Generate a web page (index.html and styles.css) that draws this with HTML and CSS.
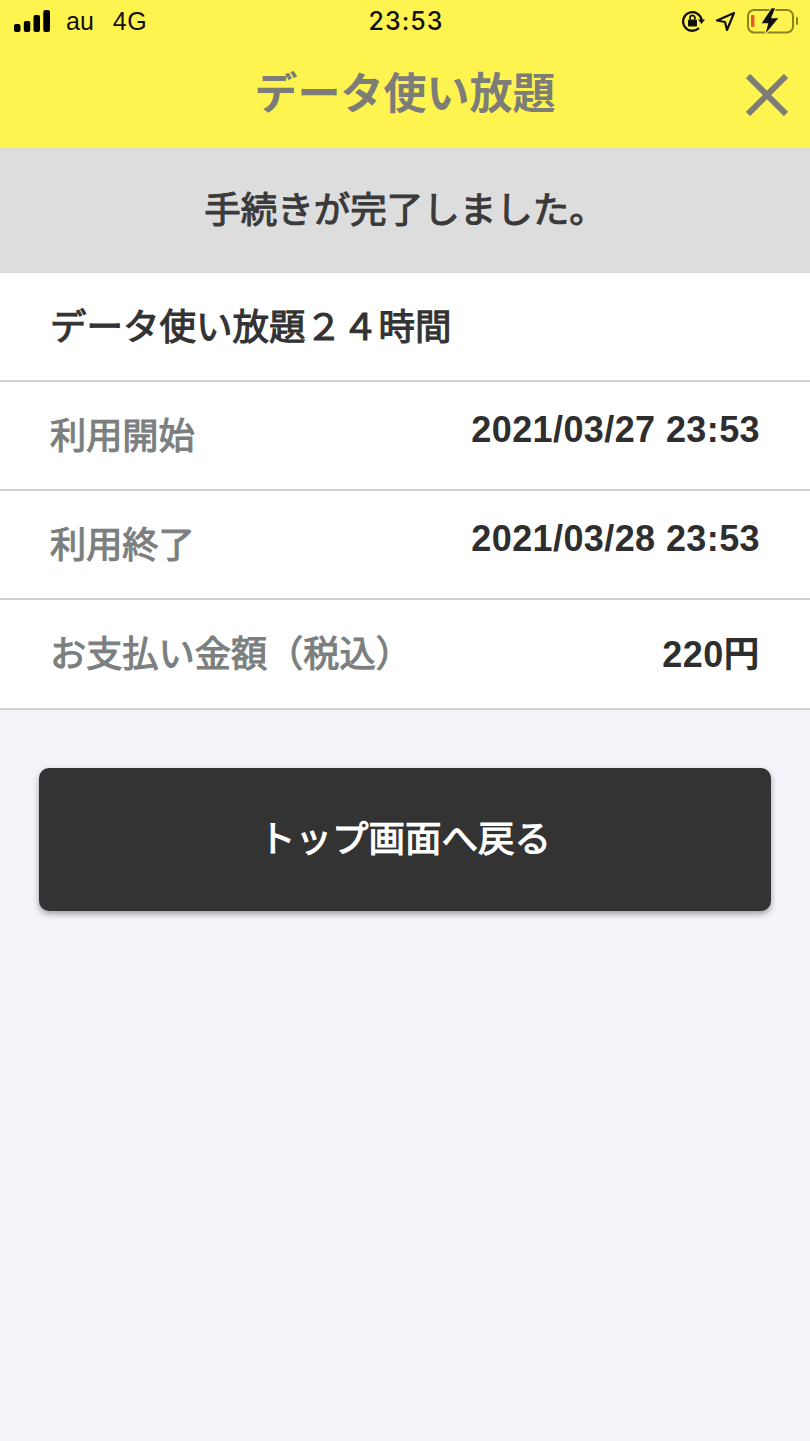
FILE: index.html
```html
<!DOCTYPE html>
<html lang="ja">
<head>
    <meta charset="UTF-8">
    <meta name="viewport" content="width=device-width, initial-scale=1.0">
    <title>データ使い放題</title>
    <link rel="stylesheet" href="styles.css">
</head>
<body>

    <!-- ステータスバー + ヘッダー -->
    <header class="top">
        <div class="status-bar">
            <div class="status-left">
                <svg class="signal" width="36" height="22" viewBox="0 0 36 22">
                    <rect x="0" y="14" width="6.5" height="8" rx="2"/>
                    <rect x="9.8" y="11" width="6.5" height="11" rx="2"/>
                    <rect x="19.5" y="5" width="6.5" height="17" rx="2"/>
                    <rect x="29.3" y="0" width="6.7" height="22" rx="2"/>
                </svg>
                <span class="carrier">au</span>
                <span class="network">4G</span>
            </div>
            <div class="status-time">23:53</div>
            <div class="status-right">
                <svg width="24" height="24" viewBox="0 0 24 24">
                    <path d="M20.6 11a9.3 9.3 0 1 0-2.6 8" fill="none" stroke="#111" stroke-width="2.3"/>
                    <path d="M17 10.5h7l-3.5 4.5z" fill="#111"/>
                    <rect x="7" y="10.5" width="9" height="7" rx="1" fill="#111"/>
                    <path d="M9.1 10.5V8.8a2.4 2.4 0 0 1 4.8 0v1.7" fill="none" stroke="#111" stroke-width="1.7"/>
                </svg>
                <svg class="location" width="21" height="21" viewBox="0 0 21 21">
                    <path d="M19 2 2 9.5l8 1.5 2 8z" fill="none" stroke="#111" stroke-width="2.2" stroke-linejoin="round"/>
                </svg>
                <svg class="battery" width="52" height="30" viewBox="0 0 52 30">
                    <rect x="2" y="4" width="45" height="22.5" rx="6" fill="none" stroke="#8a8420" stroke-width="2"/>
                    <rect x="5" y="9" width="3.4" height="12" rx="1" fill="#e2592a"/>
                    <rect x="50" y="11" width="2" height="8" rx="1" fill="#8a8420"/>
                    <path class="bolt" d="M25.7 2.3 15.7 17.3h6.6l-2.6 10 12.6-15h-7.3l4-10z"/>
                </svg>
            </div>
        </div>
        <div class="title-bar">
            <h1>データ使い放題</h1>
            <svg class="close" width="42" height="42" viewBox="0 0 42 42">
                <path d="M2 2 40 40M40 2 2 40" stroke="#7d7d78" stroke-width="6" fill="none"/>
            </svg>
        </div>
    </header>

    <div class="notice">手続きが完了しました。</div>

    <!-- 内容 -->
    <section class="details">
        <div class="row row-name">データ使い放題２４時間</div>
        <div class="row">
            <span class="label">利用開始</span>
            <span class="value value-date">2021/03/27 23:53</span>
        </div>
        <div class="row">
            <span class="label">利用終了</span>
            <span class="value value-date">2021/03/28 23:53</span>
        </div>
        <div class="row">
            <span class="label">お支払い金額（税込）</span>
            <span class="value">220円</span>
        </div>
    </section>

    <div class="actions">
        <a href="#" class="back-button">トップ画面へ戻る</a>
    </div>

</body>
</html>
```

FILE: styles.css
```css
* {
    margin: 0;
    padding: 0;
    box-sizing: border-box;
}

body {
    background-color: #f3f5fa;
    color: #333;
    font-family: "Liberation Sans", "Noto Sans CJK JP", sans-serif;
    text-spacing-trim: space-all;
    min-height: 1441px;
}

/* ヘッダー */
.top {
    height: 148px;
    background-color: #fff44f;
}

.status-bar {
    height: 44px;
    display: grid;
    grid-template-columns: 1fr auto 1fr;
    align-items: center;
    padding: 0 12px 2px 14px;
    color: #111;
}

.status-left {
    display: flex;
    align-items: center;
}

.carrier {
    font-size: 25px;
    margin-left: 16px;
}

.network {
    font-size: 25px;
    margin-left: 19px;
    letter-spacing: 0.5px;
}

.status-time {
    font-family: Inter, "Liberation Sans", sans-serif;
    font-size: 25px;
    font-weight: 500;
    letter-spacing: 1px;
}

.status-right {
    display: flex;
    align-items: center;
    justify-content: flex-end;
    gap: 10px;
}

.bolt {
    fill: #111;
    stroke: #fff44f;
    stroke-width: 2;
    paint-order: stroke;
}

.title-bar {
    position: relative;
    height: 104px;
    display: flex;
    align-items: center;
    justify-content: center;
    padding-bottom: 12px;
}

.title-bar h1 {
    font-size: 43px;
    font-weight: 700;
    color: #7d7d78;
}

.close {
    position: absolute;
    right: 22px;
    top: 30px;
}

/* 完了メッセージ */
.notice {
    height: 125px;
    padding-bottom: 6px;
    background-color: #dddddd;
    display: flex;
    align-items: center;
    justify-content: center;
    font-size: 36.5px;
    -webkit-text-stroke: 1.1px #3a3a3a;
    color: #3a3a3a;
}

/* 明細 */
.details {
    background-color: #fff;
}

.row {
    height: 109.2px;
    padding: 0 50px;
    display: flex;
    justify-content: space-between;
    align-items: center;
    border-bottom: 2px solid #d0d0d0;
}

.row-name {
    height: 109px;
    padding-bottom: 4px;
    font-size: 36.5px;
    -webkit-text-stroke: 1.1px #333;
    color: #333;
}

.label {
    font-size: 36.2px;
    -webkit-text-stroke: 1.1px #7b7f7f;
    color: #7b7f7f;
    margin-bottom: 6px;
}

.value {
    font-size: 36px;
    font-weight: 700;
    letter-spacing: 0.4px;
    color: #2e2e2e;
    margin-bottom: 6px;
}

.value-date {
    margin-bottom: 12px;
}

/* ボタン */
.actions {
    padding: 58.4px 39px 0;
}

.back-button {
    display: flex;
    height: 143px;
    padding-bottom: 6px;
    align-items: center;
    justify-content: center;
    background-color: #333;
    color: #fff;
    font-size: 36.5px;
    -webkit-text-stroke: 1.1px #fff;
    text-decoration: none;
    border-radius: 10px;
    box-shadow: 0 3px 6px rgba(0, 0, 0, 0.35);
}
```
